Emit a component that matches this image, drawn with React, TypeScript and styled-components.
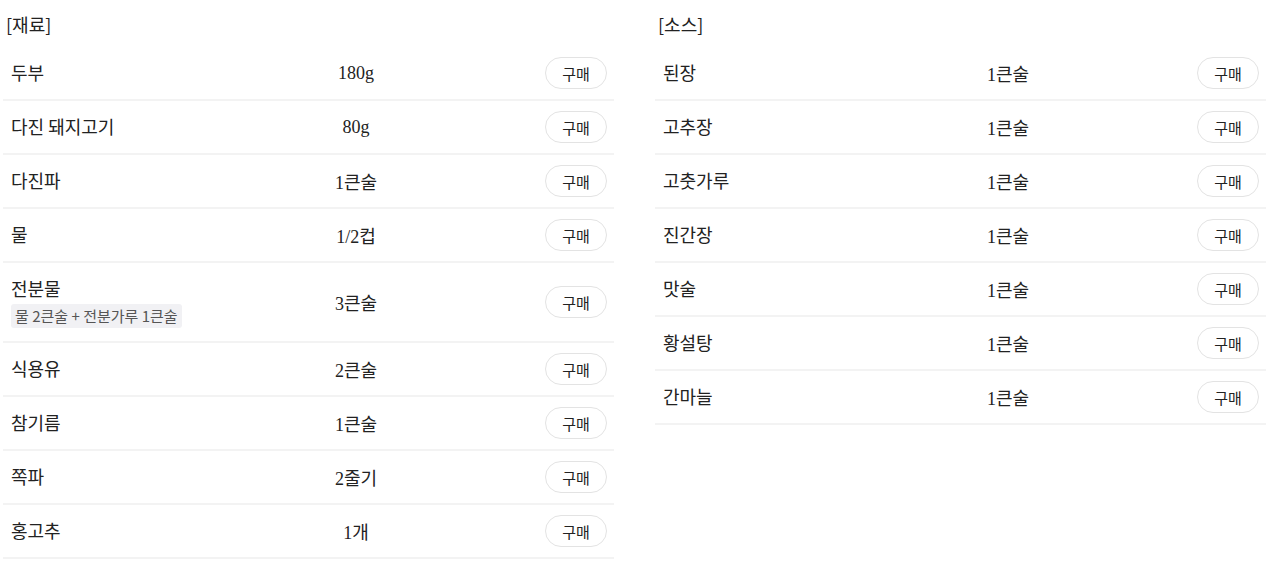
import styled, { createGlobalStyle } from "styled-components";

const GlobalStyle = createGlobalStyle`
    body {
        margin: 0;
        background: #fff;
        font-family: "Noto Sans CJK KR", "Noto Sans", sans-serif;
        color: #222;
    }
`;

const Page = styled.div`
    display: grid;
    grid-template-columns: 611px 611px;
    column-gap: 41px;
    padding-left: 3px;
    align-items: start;
`;

const Section = styled.section`
    display: flex;
    flex-direction: column;
`;

const Title = styled.h3`
    margin: 0;
    height: 47px;
    padding-left: 3px;
    display: flex;
    align-items: center;
    font-size: 18px;
    font-weight: 400;
    color: #222;
`;

const Row = styled.div<{ $tall?: boolean }>`
    display: grid;
    grid-template-columns: 285px 120px 1fr;
    align-items: center;
    height: ${(p) => (p.$tall ? 78 : 52)}px;
    padding: 0 7px 0 8px;
    border-bottom: 2px solid #f3f3f3;
`;

const Name = styled.div`
    display: flex;
    flex-direction: column;
    align-items: flex-start;
    gap: 3px;
    font-size: 18px;
    line-height: 1.4;
    color: #222;
`;

const Note = styled.span`
    background: #f1f1f4;
    border-radius: 3px;
    padding: 0 4px;
    font-size: 15px;
    line-height: 24px;
    color: #555;
`;

const Amount = styled.div`
    text-align: center;
    font-family: "Liberation Serif", "Noto Sans CJK KR", serif;
    font-size: 18px;
    color: #222;
`;

const BuyButton = styled.button`
    justify-self: end;
    width: 62px;
    height: 32px;
    border: 1px solid #e3e3e3;
    border-radius: 16px;
    background: #fff;
    font-family: "Noto Sans CJK KR", sans-serif;
    font-size: 15px;
    color: #222;
    padding: 0;
    cursor: pointer;
`;

type Item = { name: string; amount: string; note?: string };

const ingredients: Item[] = [
    { name: "두부", amount: "180g" },
    { name: "다진 돼지고기", amount: "80g" },
    { name: "다진파", amount: "1큰술" },
    { name: "물", amount: "1/2컵" },
    { name: "전분물", amount: "3큰술", note: "물 2큰술 + 전분가루 1큰술" },
    { name: "식용유", amount: "2큰술" },
    { name: "참기름", amount: "1큰술" },
    { name: "쪽파", amount: "2줄기" },
    { name: "홍고추", amount: "1개" },
];

const sauce: Item[] = [
    { name: "된장", amount: "1큰술" },
    { name: "고추장", amount: "1큰술" },
    { name: "고춧가루", amount: "1큰술" },
    { name: "진간장", amount: "1큰술" },
    { name: "맛술", amount: "1큰술" },
    { name: "황설탕", amount: "1큰술" },
    { name: "간마늘", amount: "1큰술" },
];

function ItemList({ title, items }: { title: string; items: Item[] }) {
    return (
        <Section>
            <Title>{title}</Title>
            {items.map((it) => (
                <Row key={it.name} $tall={!!it.note}>
                    <Name>
                        {it.name}
                        {it.note && <Note>{it.note}</Note>}
                    </Name>
                    <Amount>{it.amount}</Amount>
                    <BuyButton type="button">구매</BuyButton>
                </Row>
            ))}
        </Section>
    );
}

export default function App() {
    return (
        <>
            <GlobalStyle />
            <Page>
                <ItemList title="[재료]" items={ingredients} />
                <ItemList title="[소스]" items={sauce} />
            </Page>
        </>
    );
}
